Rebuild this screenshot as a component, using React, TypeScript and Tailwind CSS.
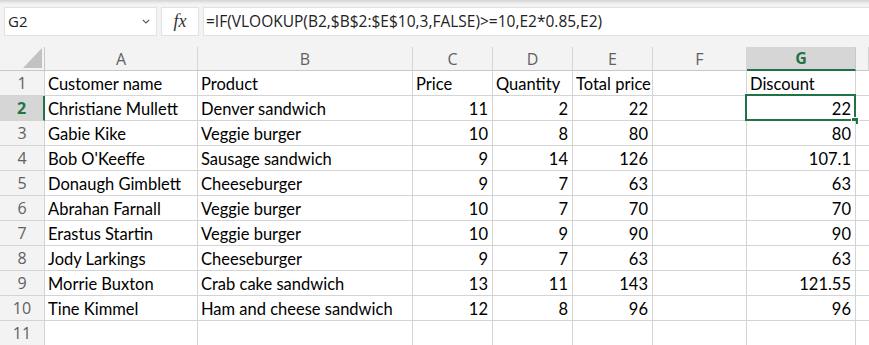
import React from "react";

type Row = [string, string, string, string, string, string, string];

const rows: Row[] = [
  ["Customer name", "Product", "Price", "Quantity", "Total price", "", "Discount"],
  ["Christiane Mullett", "Denver sandwich", "11", "2", "22", "", "22"],
  ["Gabie Kike", "Veggie burger", "10", "8", "80", "", "80"],
  ["Bob O'Keeffe", "Sausage sandwich", "9", "14", "126", "", "107.1"],
  ["Donaugh Gimblett", "Cheeseburger", "9", "7", "63", "", "63"],
  ["Abrahan Farnall", "Veggie burger", "10", "7", "70", "", "70"],
  ["Erastus Startin", "Veggie burger", "10", "9", "90", "", "90"],
  ["Jody Larkings", "Cheeseburger", "9", "7", "63", "", "63"],
  ["Morrie Buxton", "Crab cake sandwich", "13", "11", "143", "", "121.55"],
  ["Tine Kimmel", "Ham and cheese sandwich", "12", "8", "96", "", "96"],
  ["", "", "", "", "", "", ""],
];

const letters = ["A", "B", "C", "D", "E", "F", "G", ""];

function Cell({ value, header, selected }: { value: string; header: boolean; selected: boolean }) {
  const numeric = !header && value !== "" && /^[0-9.]+$/.test(value);
  return (
    <div
      className={
        "relative h-[25px] border-r border-b border-[#d4d4d4] bg-white flex items-end overflow-visible whitespace-nowrap text-[16.5px] leading-[21px] text-black font-['Lato',sans-serif] " +
        (numeric ? "justify-end pr-[4px]" : "justify-start pl-[3px]")
      }
    >
      <span>{value}</span>
      {selected && (
        <>
          <div className="absolute left-[-2px] top-[-2px] w-[111px] h-[27px] border-2 border-[#217346]" />
          <div className="absolute left-[104px] top-[21px] w-[8px] h-[8px] bg-[#217346] border border-white" />
        </>
      )}
    </div>
  );
}

export default function App() {
  return (
    <div className="w-[869px] h-[345px] overflow-hidden bg-white">
      {/* formula bar */}
      <div className="h-[47px] bg-[linear-gradient(#d4d4d4,#f3f3f3_4px)] flex items-start pt-[7px] pl-[4px] gap-[4px]">
        <div className="w-[153px] h-[29px] shrink-0 bg-white border border-[#e1e1e1] flex items-center justify-between pl-[3px] pr-[6px] font-['Open_Sans',sans-serif] text-[15px] text-[#222]">
          <span>G2</span>
          <svg width="8" height="5" viewBox="0 0 8 5" fill="none">
            <path d="M0.8 0.8 L4 4 L7.2 0.8" stroke="#555" strokeWidth="1.1" />
          </svg>
        </div>
        <div className="w-[38px] h-[29px] shrink-0 bg-white border border-[#e1e1e1] flex items-center justify-center font-['Liberation_Serif',serif] italic text-[18px] text-[#333]">
          fx
        </div>
        <div className="flex-1 h-[29px] bg-white border border-r-0 border-[#e1e1e1] flex items-center pl-[2px] whitespace-nowrap font-['Open_Sans',sans-serif] text-[15.5px] text-[#222]">
          =IF(VLOOKUP(B2,$B$2:$E$10,3,FALSE)&gt;=10,E2*0.85,E2)
        </div>
      </div>

      {/* grid */}
      <div className="grid grid-cols-[45px_153px_215px_80px_80px_80px_94px_109px_1fr]">
        {/* column headers */}
        <div className="relative h-[24px] bg-[#f3f3f3] border-r border-b border-[#c8c8c8]">
          <svg className="absolute left-[23px] top-[1px]" width="19" height="20" viewBox="0 0 19 20">
            <polygon points="0,20 19,20 19,0" fill="#c2c2c2" />
          </svg>
        </div>
        {letters.map((l, i) => {
          const sel = l === "G";
          return (
            <div
              key={"h" + i}
              className={
                "h-[24px] flex items-center justify-center font-['Open_Sans',sans-serif] text-[16px] " +
                (sel
                  ? "bg-[#d6d6d6] border-r border-r-[#c8c8c8] border-b-2 border-b-[#217346] text-[#217346] font-bold"
                  : "bg-[#f3f3f3] border-r border-b border-[#d4d4d4] border-b-[#c8c8c8] text-[#616161]")
              }
            >
              {l}
            </div>
          );
        })}

        {rows.map((r, ri) => {
          const n = ri + 1;
          const selRow = n === 2;
          return (
            <React.Fragment key={"r" + ri}>
              <div
                className={
                  "h-[25px] flex items-center justify-center font-['Open_Sans',sans-serif] text-[16px] border-b " +
                  (selRow
                    ? "bg-[#d6d6d6] border-r-2 border-r-[#217346] border-b-[#d4d4d4] text-[#217346] font-bold"
                    : "bg-[#f3f3f3] border-r border-[#d4d4d4] text-[#616161]")
                }
              >
                {n}
              </div>
              {r.map((v, ci) => (
                <Cell key={ci} value={v} header={ri === 0} selected={ri === 1 && ci === 6} />
              ))}
              <div className="h-[25px] border-b border-[#d4d4d4] bg-white" />
            </React.Fragment>
          );
        })}
      </div>
    </div>
  );
}
